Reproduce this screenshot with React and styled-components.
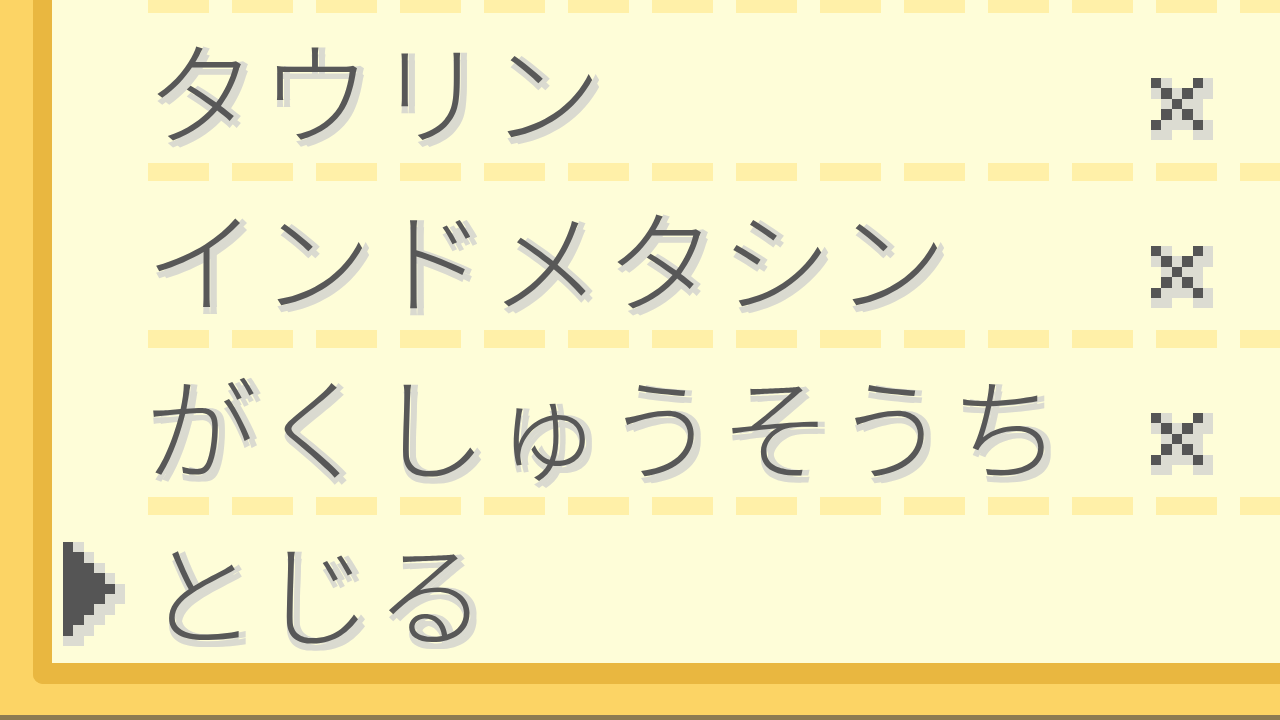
import React from "react";
import styled, { createGlobalStyle } from "styled-components";

const GlobalStyle = createGlobalStyle`
  html, body {
    margin: 0;
    padding: 0;
    background: #fcd465;
  }
`;

const Screen = styled.div`
  width: 1280px;
  height: 720px;
  box-sizing: border-box;
  background: #fcd465;
  border-bottom: 5px solid #8c7b52;
  padding-left: 33px;
  padding-bottom: 31px;
  display: flex;
  overflow: hidden;
`;

const Frame = styled.div`
  flex: 1;
  display: flex;
  flex-direction: column;
  background: #fefdd8;
  border-left: 19px solid #e9b740;
  border-bottom: 21px solid #e9b740;
  border-bottom-left-radius: 10px;
  overflow: hidden;
`;

const Separator = styled.div`
  flex-shrink: 0;
  height: ${(p) => p.$h}px;
  margin-left: 96px;
  background: repeating-linear-gradient(
    90deg,
    #fff0a8 0 61px,
    transparent 61px 84px
  );
`;

const Row = styled.div`
  display: flex;
  align-items: center;
  box-sizing: border-box;
  height: ${(p) => (p.$h ? `${p.$h}px` : "auto")};
  flex: ${(p) => (p.$h ? "0 0 auto" : "1")};
  padding-left: 11px;
  padding-right: 67px;
`;

const CursorSlot = styled.div`
  width: 82px;
  flex-shrink: 0;
  display: flex;
  align-items: center;
  margin-top: 10px;
`;

const Label = styled.span`
  font-family: "Noto Sans CJK JP", "Noto Sans", sans-serif;
  font-size: 112px;
  font-weight: 300;
  letter-spacing: 3px;
  line-height: 1;
  color: #585858;
  white-space: nowrap;
  text-shadow: 7px 0 #dadad0, 0 7px #dadad0, 7px 7px #dadad0;
`;

const Mark = styled.div`
  margin-left: auto;
  align-self: flex-start;
  margin-top: 65px;
  display: flex;
`;

// pixel sprite: dark pixels with a light shadow one pixel right/down
const Sprite = ({ pixels, cols, rows, size = 10.4 }) => (
  <svg
    width={(cols + 1) * size}
    height={(rows + 1) * size}
    viewBox={`0 0 ${cols + 1} ${rows + 1}`}
    shapeRendering="crispEdges"
  >
    {pixels.map(([x, y, w = 1]) => (
      <g key={`s${x}-${y}`} fill="#dcdcd2">
        <rect x={x + 1} y={y} width={w} height={1} />
        <rect x={x} y={y + 1} width={w} height={1} />
        <rect x={x + 1} y={y + 1} width={w} height={1} />
      </g>
    ))}
    {pixels.map(([x, y, w = 1]) => (
      <rect key={`d${x}-${y}`} x={x} y={y} width={w} height={1} fill="#555555" />
    ))}
  </svg>
);

const crossPixels = [
  [0, 0], [4, 0],
  [1, 1], [3, 1],
  [2, 2],
  [1, 3], [3, 3],
  [0, 4], [4, 4],
];

const cursorPixels = [1, 2, 3, 4, 5, 4, 3, 2, 1].map((w, y) => [0, y, w]);

const items = [
  { name: "タウリン", h: 150 },
  { name: "インドメタシン", h: 149 },
  { name: "がくしゅうそうち", h: 149 },
];

const App = () => {
  return (
    <>
      <GlobalStyle />
      <Screen>
        <Frame>
          <Separator $h={13} />
          {items.map((item) => (
            <React.Fragment key={item.name}>
              <Row $h={item.h}>
                <CursorSlot />
                <Label>{item.name}</Label>
                <Mark>
                  <Sprite pixels={crossPixels} cols={5} rows={5} />
                </Mark>
              </Row>
              <Separator $h={18} />
            </React.Fragment>
          ))}
          <Row>
            <CursorSlot>
              <Sprite pixels={cursorPixels} cols={5} rows={9} />
            </CursorSlot>
            <Label>とじる</Label>
          </Row>
        </Frame>
      </Screen>
    </>
  );
};

export default App;
